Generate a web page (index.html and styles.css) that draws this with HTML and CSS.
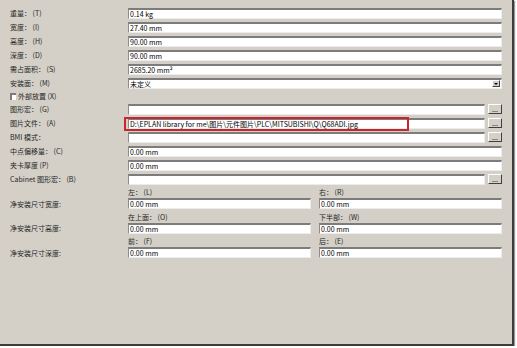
FILE: index.html
```html
<!DOCTYPE html>
<html lang="zh-CN">
  <head>
    <meta charset="UTF-8" />
    <title>部件属性</title>
    <link rel="stylesheet" href="styles.css">
  </head>
  <body>
    <div class="panel">
      <!-- Single value rows -->
      <div class="form">
        <div class="row"><span class="lbl">重量： (T)</span><div class="field">0.14 kg</div></div>
        <div class="row"><span class="lbl">宽度： (I)</span><div class="field">27.40 mm</div></div>
        <div class="row"><span class="lbl">高度： (H)</span><div class="field">90.00 mm</div></div>
        <div class="row"><span class="lbl">深度： (D)</span><div class="field">90.00 mm</div></div>
        <div class="row"><span class="lbl">需占面积： (S)</span><div class="field">2685.20 mm²</div></div>
        <div class="row">
          <span class="lbl">安装面： (M)</span>
          <div class="field select"><span>未定义</span><span class="arrow"></span></div>
        </div>
        <div class="row check-row"><span class="check"></span><span>外部放置 (X)</span></div>
        <div class="row"><span class="lbl">图形宏： (G)</span><div class="field"></div><button class="more">...</button></div>
        <div class="row">
          <span class="lbl">图片文件： (A)</span>
          <div class="field marked">D:\EPLAN library for me\图片\元件图片\PLC\MITSUBISHI\Q\Q68ADI.jpg<span class="mark"></span></div>
          <button class="more">...</button>
        </div>
        <div class="row"><span class="lbl">BMI 模式：</span><div class="field"></div><button class="more">...</button></div>
        <div class="row"><span class="lbl">中点偏移量： (C)</span><div class="field">0.00 mm</div></div>
        <div class="row"><span class="lbl">夹卡厚度 (P)</span><div class="field">0.00 mm</div></div>
        <div class="row"><span class="lbl">Cabinet 图形宏： (B)</span><div class="field"></div><button class="more">...</button></div>
      </div>

      <!-- Net mounting size pairs -->
      <div class="pair">
        <span></span><span class="cap">左： (L)</span><span class="cap">右： (R)</span>
        <span class="lbl">净安装尺寸宽度:</span><div class="field">0.00 mm</div><div class="field">0.00 mm</div>
      </div>
      <div class="pair">
        <span></span><span class="cap">在上面： (O)</span><span class="cap">下半部： (W)</span>
        <span class="lbl">净安装尺寸高度:</span><div class="field">0.00 mm</div><div class="field">0.00 mm</div>
      </div>
      <div class="pair">
        <span></span><span class="cap">前： (F)</span><span class="cap">后： (E)</span>
        <span class="lbl">净安装尺寸深度:</span><div class="field">0.00 mm</div><div class="field">0.00 mm</div>
      </div>
    </div>
  </body>
</html>
```

FILE: styles.css
```css
body {
  margin: 0;
  background: #fff;
  font-family: "Noto Sans CJK SC", sans-serif;
  font-size: 7px;
  color: #262626;
}
.panel {
  box-sizing: border-box;
  width: 514px;
  height: 346px;
  padding: 6px 10px 0;
  background: #d4d0c8;
  border-right: 2px solid #3c3c3c;
  border-bottom: 2px solid #3c3c3c;
  box-shadow: 1px 1px 1px #9a9a9a;
}
.row {
  display: flex;
  align-items: center;
  height: 14px;
}
.lbl {
  width: 118px;
  flex: none;
  white-space: nowrap;
}
.field {
  position: relative;
  flex: 1;
  box-sizing: border-box;
  height: 11px;
  padding-left: 1px;
  background: #fff;
  border-top: 2px solid #7c7c7c;
  border-left: 1px solid #8c8c8c;
  border-right: 1px solid #ececec;
  border-bottom: 1px solid #ececec;
  line-height: 8px;
  white-space: nowrap;
  color: #000;
}
.select {
  display: flex;
  justify-content: space-between;
  align-items: center;
  padding-right: 1px;
}
.arrow {
  box-sizing: border-box;
  width: 8px;
  height: 7px;
  display: flex;
  justify-content: center;
  align-items: center;
  background: #d4d0c8;
  border: 1px solid;
  border-color: #fff #404040 #404040 #fff;
}
.arrow::after {
  content: "";
  border-left: 2px solid transparent;
  border-right: 2px solid transparent;
  border-top: 2px solid #000;
}
.check-row {
  height: 12px;
  gap: 2px;
}
.check {
  box-sizing: border-box;
  width: 6px;
  height: 7px;
  background: #fff;
  border-top: 2px solid #7c7c7c;
  border-left: 2px solid #7c7c7c;
}
.more {
  flex: none;
  box-sizing: border-box;
  width: 14px;
  height: 10px;
  margin-left: 3px;
  padding: 0;
  background: #d4d0c8;
  border: 1px solid;
  border-color: #fff #404040 #404040 #fff;
  font-family: inherit;
  font-size: 7px;
  line-height: 6px;
  color: #000;
}
.mark {
  position: absolute;
  left: -5px;
  top: -3px;
  width: 285px;
  height: 14px;
  box-sizing: border-box;
  border: 2px solid #c9252c;
}
.pair {
  display: grid;
  grid-template-columns: 110px 1fr 1fr;
  grid-template-rows: 11px 13.5px;
  column-gap: 8px;
}
.pair .cap {
  align-self: end;
  line-height: 9px;
  white-space: nowrap;
}
.pair .lbl {
  width: auto;
  align-self: center;
}
.pair .field {
  margin-top: 1px;
}
```
